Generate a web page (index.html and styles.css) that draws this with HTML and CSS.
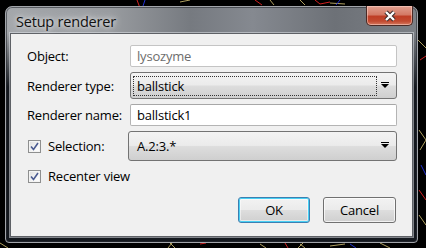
FILE: index.html
```html
<!DOCTYPE html>
<html>
<head>
<meta charset="utf-8">
<link rel="stylesheet" href="styles.css">
</head>
<body>
<div class="scene">
  <svg class="bg" width="426" height="248" viewBox="0 0 426 248">
    <g fill="none" stroke-width="1">
      <path d="M137 0 L140 8" stroke="#d02020"/>
      <path d="M145 0 L143 6" stroke="#2030d0"/>
      <path d="M180 2 L190 0" stroke="#b0a060"/>
      <path d="M255 0 L262 5" stroke="#d02020"/>
      <path d="M270 0 L274 5" stroke="#b0a060"/>
      <path d="M300 0 L305 5" stroke="#b0a060"/>
      <path d="M315 0 L320 4 L330 2" stroke="#d02020"/>
      <path d="M330 3 L345 4" stroke="#b0a060"/>
      <path d="M340 0 L336 5" stroke="#2030d0"/>
      <path d="M418 40 L426 48" stroke="#b0a060"/>
      <path d="M420 60 L426 56" stroke="#d02020"/>
      <path d="M419 130 L426 140 L420 150" stroke="#b0a060"/>
      <path d="M421 165 L426 175" stroke="#2030d0"/>
      <path d="M419 190 L426 200" stroke="#d02020"/>
      <path d="M419 215 L426 225" stroke="#b0a060"/>
      <path d="M170 243 L175 248" stroke="#b0a060"/>
      <path d="M172 243 L168 248" stroke="#b0a060"/>
      <path d="M200 244 L206 243" stroke="#d02020"/>
      <path d="M260 244 L266 248" stroke="#b0a060"/>
      <path d="M285 243 L288 248" stroke="#d02020"/>
      <path d="M300 244 L305 248 M303 243 L298 248" stroke="#b0a060"/>
      <path d="M330 246 L345 244" stroke="#b0a060"/>
      <path d="M350 244 L356 248" stroke="#2030d0"/>
      <path d="M380 243 L390 248" stroke="#b0a060"/>
      <path d="M0 243 L8 248" stroke="#b0a060"/>
    </g>
  </svg>
  <div class="window">
    <div class="titlebar">
      <span class="title">Setup renderer</span>
      <div class="close">
        <svg width="16" height="12" viewBox="0 0 16 12">
          <path d="M4 2 L12 10 M12 2 L4 10" stroke="#3a2a2a" stroke-width="4.4"/>
          <path d="M4 2 L12 10 M12 2 L4 10" stroke="#fff" stroke-width="2.4"/>
        </svg>
      </div>
    </div>
    <div class="client">
      <div class="row r-object">
        <span class="label">Object:</span>
        <div class="field input disabled">lysozyme</div>
      </div>
      <div class="row r-type">
        <span class="label">Renderer type:</span>
        <div class="field combo focus">
          <span class="focusrect">ballstick</span>
          <span class="arrow"></span>
        </div>
      </div>
      <div class="row r-name">
        <span class="label">Renderer name:</span>
        <div class="field input">ballstick1</div>
      </div>
      <div class="row r-sel">
        <label class="label check-label"><span class="check"><svg width="9" height="9" viewBox="0 0 9 9"><path d="M1 4.5 L3.5 7.5 L8 1" stroke="#4a5a90" stroke-width="1.6" fill="none"/></svg></span>Selection:</label>
        <div class="field combo sel">
          <span class="value">A.2:3.*</span>
          <span class="arrow"></span>
        </div>
      </div>
      <div class="row r-recenter">
        <label class="check-label"><span class="check"><svg width="9" height="9" viewBox="0 0 9 9"><path d="M1 4.5 L3.5 7.5 L8 1" stroke="#4a5a90" stroke-width="1.6" fill="none"/></svg></span>Recenter view</label>
      </div>
      <div class="buttons">
        <button class="btn default">OK</button>
        <button class="btn">Cancel</button>
      </div>
    </div>
  </div>
</div>
</body>
</html>
```

FILE: styles.css
```css
* { box-sizing: border-box; }
html, body { margin: 0; padding: 0; }
body {
  background: #000;
  width: 426px;
  height: 248px;
  overflow: hidden;
  font-family: "Open Sans", "Noto Sans", sans-serif;
  font-size: 13px;
  letter-spacing: -0.2px;
  color: #000;
}
.scene {
  position: relative;
  width: 426px;
  height: 248px;
  padding: 6px 0 0 5px;
}
.bg { position: absolute; left: 0; top: 0; }
.window {
  position: relative;
  width: 413px;
  height: 237px;
  border: 1px solid #a2a5aa;
  border-radius: 7px 7px 4px 4px;
  background:
    linear-gradient(to bottom, rgba(0,0,0,0) 0, rgba(0,0,0,0) 20px, rgba(20,24,30,0.0) 26px, rgba(20,24,30,1) 80px),
    linear-gradient(to right, #a4a7ab 0, #999ca0 25%, #767a80 45%, #858990 60%, #6d7177 80%, #7c8086 100%);
  box-shadow: inset 0 0 0 1px rgba(40,44,50,0.6);
  padding: 0 4px 5px 4px;
}
.titlebar {
  height: 26px;
  position: relative;
  display: flex;
  align-items: center;
  padding-left: 6px;
}
.title {
  font-size: 14.5px;
  color: #111;
  text-shadow: 0 0 8px rgba(255,255,255,0.9), 0 0 4px rgba(255,255,255,0.7);
  margin-top: 2px;
}
.close {
  position: absolute;
  right: 0px;
  top: -1px;
  width: 47px;
  height: 20px;
  border: 1px solid #4a2a25;
  border-top: none;
  border-radius: 0 0 5px 5px;
  background: linear-gradient(to bottom, #e2a090 0, #d47a66 45%, #bf3e26 55%, #c24a30 80%, #d67a60 100%);
  box-shadow: inset 0 0 0 1px rgba(255,220,210,0.5);
  display: flex;
  align-items: center;
  justify-content: center;
}
.client {
  height: 204px;
  background: #f0f0f0;
  border: 1px solid #5e6166;
  box-shadow: 0 0 0 1px rgba(220,224,230,0.55);
  padding: 10px 15px 0 15px;
  display: flex;
  flex-direction: column;
}
.row {
  display: flex;
  align-items: center;
}
.label {
  width: 104px;
  flex: none;
  padding-left: 1px;
}
.field {
  flex: none;
  width: 267px;
  display: flex;
  align-items: center;
  padding-left: 6px;
}
.input {
  height: 22px;
  background: #fff;
  border: 1px solid #b4b4b4;
  border-top-color: #a7a7a7;
  border-radius: 2px;
}
.disabled { color: #6d6d6d; border-color: #c4c4c4; }
.combo {
  border: 1px solid #737373;
  border-radius: 3px;
  background: linear-gradient(to bottom, #f3f3f3 0, #ebebeb 48%, #dddddd 52%, #cfcfcf 100%);
  position: relative;
}
.r-object { margin-top: 1px; }
.r-type { margin-top: 5px; }
.r-type .combo { height: 27px; padding: 0 0 0 2px; }
.focusrect {
  width: 244px;
  height: 20px;
  border: 1px dotted #333;
  display: flex;
  align-items: center;
  padding-left: 3px;
}
.r-name { margin-top: 5px; }
.r-sel { margin-top: 5px; }
.r-sel .label { width: 102px; }
.sel { height: 30px; width: 269px; padding-left: 8px; }
.arrow {
  position: absolute;
  right: 7px;
  top: 50%;
  margin-top: -2px;
  width: 0; height: 0;
  border-left: 4px solid transparent;
  border-right: 4px solid transparent;
  border-top: 4px solid #000;
}
.arrow::before {
  content: "";
  position: absolute;
  left: -4px;
  top: -6px;
  width: 8px;
  height: 1px;
  background: #000;
}
.check-label {
  display: flex;
  align-items: center;
  padding-left: 2px;
}
.check {
  width: 13px;
  height: 13px;
  border: 1px solid #8e8f8f;
  background: linear-gradient(135deg, #dcdcdc 0, #f6f6f6 60%, #ffffff 100%);
  box-shadow: inset 0 0 0 1px #f4f4f4;
  display: flex;
  align-items: center;
  justify-content: center;
  margin-right: 7px;
}
.r-recenter { margin-top: 6px; }
.buttons {
  display: flex;
  justify-content: flex-end;
  gap: 13px;
  margin-top: 12px;
  padding-right: 1px;
}
.btn {
  font-family: inherit;
  font-size: 13px;
  letter-spacing: -0.2px;
  height: 26px;
  width: 73px;
  border: 1px solid #707070;
  border-radius: 3px;
  background: linear-gradient(to bottom, #f2f2f2 0, #ebebeb 48%, #dddddd 52%, #cfcfcf 100%);
  box-shadow: inset 0 0 0 1px rgba(255,255,255,0.7);
  padding: 0;
  color: #000;
}
.btn.default {
  width: 72px;
  border-color: #3c7fb1;
  box-shadow: inset 0 0 0 1px #48d0f4, inset 0 0 0 2px rgba(255,255,255,0.5);
}
```
